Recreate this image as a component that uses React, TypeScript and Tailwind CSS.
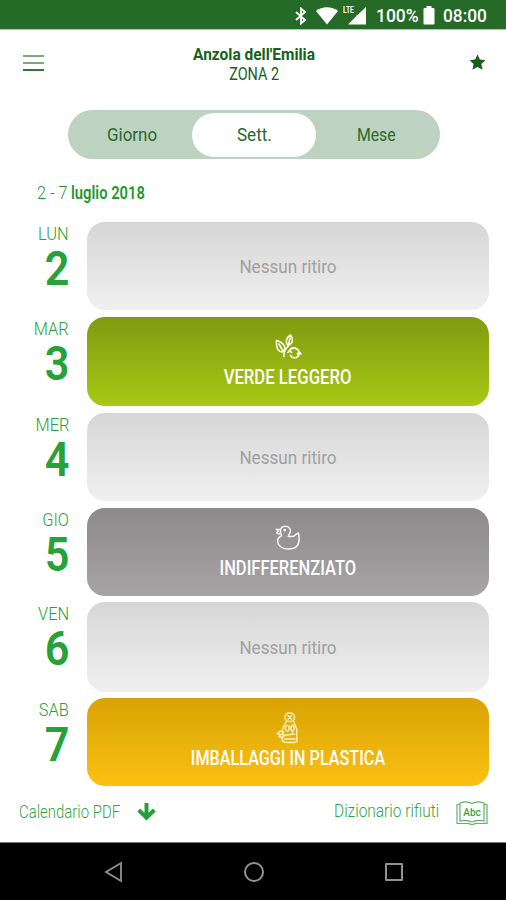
import type { ReactNode } from "react";

type Day = {
  name: string;
  num: string;
  row: string;
  card: string;
  label?: string;
  labelScale?: string;
  icon?: ReactNode;
};

const empty = "h-[88px] from-[#d6d6d6] to-[#f0f0f0]";

function LeavesIcon() {
  return (
    <svg width="27" height="26" viewBox="0 0 27 26" fill="none" stroke="#fbfde8" strokeWidth="1.6" strokeLinecap="round" strokeLinejoin="round">
      <path d="M1.500 6.500 C1 13 2 17 7 18 C12 16 10.500 9 1.500 6.500Z" />
      <path d="M4 10 L8 17 M9 22.500 C8.500 18 10 15 13.500 12" />
      <path d="M15.500 1 C10.500 4 10.500 9 13 11.500 C18 10 18.500 5 15.500 1Z M15 4 L13.400 11" />
      <path d="M14.500 17 C16 12.800 21.500 12.800 23.800 17 M24.300 19.500 C23 24.800 17.500 25 15.500 21.500" />
      <path d="M13 18.500 L14.600 16.800 L16.500 18.300 M22.300 19.800 L24.300 18 L26 20" />
    </svg>
  );
}

function DuckIcon() {
  return (
    <svg width="26" height="26" viewBox="0 0 26 26" fill="none" stroke="#f5f5f5" strokeWidth="1.5" strokeLinecap="round" strokeLinejoin="round">
      <path d="M5.500 5 C6 2.500 8 1.200 10.500 1.200 C14 1.200 16 4 15.200 7 C14.800 8.500 13.800 9.600 13.200 11.500 H17.500 C19.500 11.500 20.500 9 23.500 8 C24.500 13 25 18 21.500 21.500 C18 24.800 10 24.800 6 22 C1.500 18.500 1.500 13 6.300 11 C7 10.300 6.500 9.500 5.500 8.300" />
      <path d="M5.500 4.700 L1.300 4.200 L3.200 6.300 L1.700 8 C3.500 9.200 5 9 5.500 8.300 Z" />
      <circle cx="9.700" cy="5.200" r=".6" />
    </svg>
  );
}

function BottleIcon() {
  return (
    <svg width="24" height="32" viewBox="0 0 24 32" fill="none" stroke="#fff2c4" strokeWidth="1.5" strokeLinecap="round" strokeLinejoin="round">
      <rect x="9" y="1" width="9.500" height="8.500" rx="4" />
      <path d="M12 3.500 L15.500 7 M15.500 3.500 L12 7" />
      <path d="M10 10 C9 13 6.500 14 6.500 18 M18 10 C18.500 14 21.500 15 20.800 20 C20 22 21.300 25 21 29 C20.500 31 8 31 6.500 29 L6.300 25" />
      <path d="M9.500 14 C12 12.500 13.500 14 13 17 C12.500 20 10 20 9.300 17 Z M16 13 C18.500 14 18.800 18 16.500 20 C14.500 18 14.500 15 16 13Z" />
      <path d="M1 21.500 L4.500 19 L7.500 20 L6 22.500 L9 23.500 L6 25.500 L3 24.500 L4.500 22.500 Z M10 23 L18 22 M9 27 H19" />
    </svg>
  );
}

const days: Day[] = [
  { name: "LUN", num: "2", row: "h-[95px]", card: empty },
  {
    name: "MAR", num: "3", row: "h-[96px]", card: "h-[89px] from-[#819a10] to-[#a7c914]",
    label: "VERDE LEGGERO", labelScale: "scale-x-[.835]", icon: <LeavesIcon />,
  },
  { name: "MER", num: "4", row: "h-[95px]", card: empty },
  {
    name: "GIO", num: "5", row: "h-[94px]", card: "h-[88px] from-[#8c8a8b] to-[#a6a4a5]",
    label: "INDIFFERENZIATO", labelScale: "scale-x-[.825]", icon: <DuckIcon />,
  },
  { name: "VEN", num: "6", row: "h-[96px]", card: "h-[90px] from-[#d6d6d6] to-[#f0f0f0]" },
  {
    name: "SAB", num: "7", row: "h-[88px]", card: "h-[88px] from-[#d8a304] to-[#fbc012]",
    label: "IMBALLAGGI IN PLASTICA", labelScale: "scale-x-[.81]", icon: <BottleIcon />,
  },
];

function StatusBar() {
  return (
    <div className="flex h-[30px] items-center border-b border-[#a9c8aa] bg-[#256a27] pt-[2px] pl-[295px] text-[18px] font-medium text-white">
      <svg width="12" height="18" viewBox="0 0 12 18" fill="none" stroke="white" strokeWidth="1.8">
        <path d="M1 5 L10 13 L6 16.500 V1.500 L10 5 L1 13" />
      </svg>
      <svg className="ml-[9px]" width="22" height="18" viewBox="0 0 22 18" fill="white">
        <path d="M0 4 C6 -1 16 -1 22 4 L11 17.500Z" />
      </svg>
      <div className="ml-[5px] flex h-[20px] w-[24px] items-start">
        <span className="w-[12px] text-[9px] leading-[9px] font-bold"><span className="inline-block origin-left scale-x-[.75]">LTE</span></span>
        <svg className="-ml-[7px] shrink-0" width="18" height="19" viewBox="0 0 18 19" fill="white">
          <path d="M18 1 V18.500 H0 L8.500 10 V9 H9.500Z" />
        </svg>
      </div>
      <span className="ml-[9px] w-[47px] origin-left scale-x-[.97] leading-none">100%</span>
      <svg className="shrink-0" width="12" height="19" viewBox="0 0 12 19" fill="white">
        <path d="M3.500 0 H8.500 V2 H10.500 Q11.500 2 11.500 3 V17.500 Q11.500 18.500 10.500 18.500 H1.500 Q.5 18.500 .5 17.500 V3 Q.5 2 1.500 2 H3.500Z" />
      </svg>
      <span className="ml-[8px] origin-left scale-x-[.96] leading-none">08:00</span>
    </div>
  );
}

function Header() {
  return (
    <header className="flex h-[80px] items-start justify-between pr-[20px] pl-[23px] text-[#175f1b]">
      <div className="mt-[25px] flex w-[21px] flex-col gap-[5px]">
        <i className="h-[2px] bg-[#7fa581]" />
        <i className="h-[2px] bg-[#7fa581]" />
        <i className="h-[2px] bg-[#34763a]" />
      </div>
      <div className="mt-[14px] mr-[5px] flex flex-col items-center whitespace-nowrap">
        <h1 className="scale-x-[.91] text-[17px] leading-[20px] font-bold">Anzola dell'Emilia</h1>
        <p className="scale-x-[.8] text-[18px] leading-[19px]">ZONA 2</p>
      </div>
      <svg className="mt-[24px]" width="17" height="17" viewBox="0 0 17 17" fill="#19601f">
        <path d="M8.500 .5 L10.900 5.600 L16.500 6.200 L12.400 10 L13.600 15.800 L8.500 12.900 L3.400 15.800 L4.600 10 L.5 6.200 L6.100 5.600Z" />
      </svg>
    </header>
  );
}

function DayRow({ day }: { day: Day }) {
  return (
    <div className={`flex ${day.row}`}>
      <div className="flex w-[69px] shrink-0 flex-col items-end text-[#27a138]">
        <span className="mt-px origin-right scale-x-[.86] text-[19px] leading-[22px] font-light">{day.name}</span>
        <span className="origin-right scale-x-[.9] text-[48px] leading-[47px] font-semibold">{day.num}</span>
      </div>
      <div className={`ml-[18px] flex w-[402px] flex-col items-center rounded-[18px] bg-linear-to-b ${day.card}`}>
        {day.label ? (
          <>
            <div className="mt-[14px] flex h-[32px] items-center">{day.icon}</div>
            <span className={`mt-[2px] text-[20px] leading-[24px] font-medium whitespace-nowrap text-white ${day.labelScale}`}>{day.label}</span>
          </>
        ) : (
          <span className="my-auto scale-x-[.9] pt-[2px] text-[19px] leading-[22px] text-[#a0a0a0]">Nessun ritiro</span>
        )}
      </div>
    </div>
  );
}

export default function App() {
  return (
    <div className="flex h-[900px] w-[506px] flex-col overflow-hidden bg-white font-['Roboto',sans-serif]">
      <StatusBar />
      <Header />
      <nav className="ml-[68px] flex h-[49px] w-[372px] items-center rounded-full bg-[#bdd2c0] text-[19px] text-[#28692d]">
        <button className="w-[124px] pt-[2px] pl-[4px]"><span className="inline-block scale-x-[.89]">Giorno</span></button>
        <button className="h-[44px] w-[124px] rounded-full bg-white pt-[2px]"><span className="inline-block scale-x-[.9]">Sett.</span></button>
        <button className="w-[124px] pt-[2px] pr-[4px]"><span className="inline-block scale-x-[.83]">Mese</span></button>
      </nav>
      <div className="flex h-[63px] pt-[24px] pl-[37px] text-[18px] leading-[20px] whitespace-nowrap text-[#1f982b]">
        <span className="w-[34px] origin-left scale-x-[.9] font-light">2 - 7</span>
        <span className="origin-left scale-x-[.82] font-semibold">luglio 2018</span>
      </div>
      <main>
        {days.map((d) => <DayRow key={d.name} day={d} />)}
      </main>
      <footer className="flex h-[56px] items-start pl-[19px] text-[18px] leading-[20px] whitespace-nowrap text-[#35a443]">
        <span className="mt-[16px] w-[118px] origin-left scale-x-[.83] font-light">Calendario PDF</span>
        <svg className="mt-[17px] shrink-0" width="19" height="18" viewBox="0 0 19 18" fill="none" stroke="#23a037" strokeWidth="4">
          <path d="M9.500 0 V14 M1.700 7 L9.500 14.700 L17.300 7" />
        </svg>
        <span className="mt-[15px] ml-[178px] w-[122px] origin-left scale-x-[.86] font-light">Dizionario rifiuti</span>
        <div className="relative mt-[15px] h-[24px] w-[32px] shrink-0">
          <svg width="32" height="24" viewBox="0 0 32 24" fill="none" stroke="#60b36c" strokeWidth="1.2">
            <path d="M4 2 Q11 -.5 16 2.500 Q21 -.5 28 2 V20 Q21 18.500 16 21 Q11 18.500 4 20Z M4 3.500 H1 V22.500 H13 Q16 24.500 19 22.500 H31 V3.500 H28" />
          </svg>
          <span className="absolute inset-x-0 top-[6px] text-center text-[10px] leading-[11px] font-medium">Abc</span>
        </div>
      </footer>
      <div className="flex h-[58px] items-center border-t border-[#777777] bg-black">
        <svg className="ml-[104px]" width="19" height="22" viewBox="0 0 19 22" fill="none" stroke="#929292" strokeWidth="1.8">
          <path d="M17 2 V20 L2 11Z" />
        </svg>
        <div className="ml-[120.500px] size-[20px] rounded-full border-2 border-[#929292]" />
        <div className="ml-[121px] size-[18px] rounded-[1px] border-2 border-[#929292]" />
      </div>
    </div>
  );
}
